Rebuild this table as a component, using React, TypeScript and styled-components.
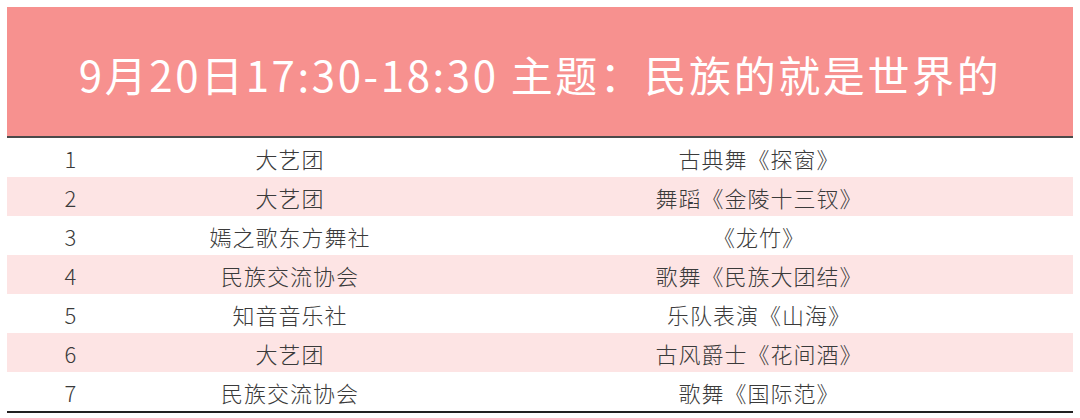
import styled, { createGlobalStyle } from "styled-components";

const GlobalStyle = createGlobalStyle`
  html, body {
    margin: 0;
    padding: 0;
    background: #fff;
  }
  body {
    font-family: "Noto Sans CJK SC", "Noto Sans", sans-serif;
  }
`;

const programs = [
  { no: 1, group: "大艺团", show: "古典舞《探窗》" },
  { no: 2, group: "大艺团", show: "舞蹈《金陵十三钗》" },
  { no: 3, group: "嫣之歌东方舞社", show: "《龙竹》" },
  { no: 4, group: "民族交流协会", show: "歌舞《民族大团结》" },
  { no: 5, group: "知音音乐社", show: "乐队表演《山海》" },
  { no: 6, group: "大艺团", show: "古风爵士《花间酒》" },
  { no: 7, group: "民族交流协会", show: "歌舞《国际范》" },
];

function App() {
  return (
    <Page>
      <GlobalStyle />
      <Table>
        <Header>
          <Title>9月20日17:30-18:30 主题：民族的就是世界的</Title>
        </Header>
        <Body>
          {programs.map((p) => (
            <Row key={p.no} striped={p.no % 2 === 0}>
              <Cell>{p.no}</Cell>
              <Cell>{p.group}</Cell>
              <Cell>{p.show}</Cell>
            </Row>
          ))}
        </Body>
      </Table>
    </Page>
  );
}

export default App;

const Page = styled.div`
  width: 1080px;
  height: 418px;
  padding: 7px 7px 0 7px;
  box-sizing: border-box;
  overflow: hidden;
`;

const Table = styled.div`
  display: flex;
  flex-direction: column;
  width: 1066px;
`;

const Header = styled.div`
  height: 129px;
  background: #f7918f;
  border-bottom: 2px solid #4a4a4a;
  display: flex;
  align-items: center;
  justify-content: center;
`;

const Title = styled.h1`
  margin: 0;
  color: #fff;
  font-family: "Noto Sans CJK SC", sans-serif;
  font-size: 42px;
  font-weight: 400;
  letter-spacing: 2.6px;
  line-height: 1;
  padding-top: 4px;
`;

const Body = styled.div`
  display: flex;
  flex-direction: column;
  border-bottom: 2px solid #222;
`;

const Row = styled.div<{ striped: boolean }>`
  display: grid;
  grid-template-columns: 128px 310px 1fr;
  height: 39px;
  align-items: center;
  background: ${(p) => (p.striped ? "#fde4e4" : "#fff")};
`;

const Cell = styled.div`
  text-align: center;
  color: #3a3a3a;
  font-family: "Noto Sans CJK SC", sans-serif;
  font-size: 22px;
  font-weight: 300;
  letter-spacing: 1px;
  line-height: 1;
`;
